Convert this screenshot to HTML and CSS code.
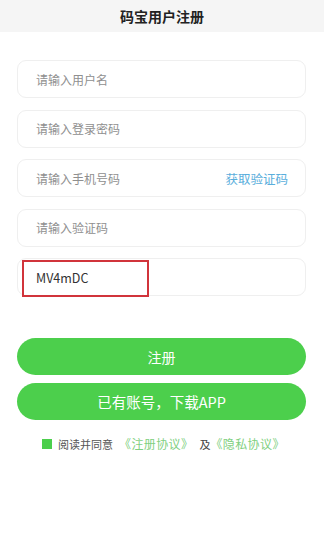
FILE: index.html
```html
<!DOCTYPE html>
<html lang="zh">
<head>
<meta charset="utf-8">
<title>码宝用户注册</title>
<link rel="stylesheet" href="styles.css">
</head>
<body>
<header class="topbar">码宝用户注册</header>
<main class="form">
  <div class="field"><span class="ph">请输入用户名</span></div>
  <div class="field"><span class="ph">请输入登录密码</span></div>
  <div class="field"><span class="ph">请输入手机号码</span><span class="getcode">获取验证码</span></div>
  <div class="field"><span class="ph">请输入验证码</span></div>
  <div class="field captcha"><span class="value">MV4mDC</span><span class="mark"></span></div>
  <div class="btn btn-register">注册</div>
  <div class="btn btn-download">已有账号，下载APP</div>
  <div class="agree">
    <span class="check"></span>
    <span class="agree-text">阅读并同意</span>
    <span class="link link-first">《注册协议》</span>
    <span class="and">及</span>
    <span class="link">《隐私协议》</span>
  </div>
</main>
</body>
</html>
```
FILE: styles.css
```css
* { box-sizing: border-box; }
html, body { margin: 0; padding: 0; background: #fff; }
body {
  font-family: "Noto Sans CJK SC", "Liberation Sans", sans-serif;
  color: #333;
  width: 324px;
  min-height: 540px;
  text-spacing-trim: space-all;
}
.topbar {
  height: 32px;
  background: #f5f5f5;
  display: flex;
  align-items: center;
  justify-content: center;
  font-size: 14px;
  font-weight: 700;
  color: #222;
}
.form {
  padding: 28px 18px 0 17px;
  display: flex;
  flex-direction: column;
}
.field {
  position: relative;
  height: 38px;
  border: 1px solid #efefef;
  border-radius: 9px;
  display: flex;
  align-items: center;
  justify-content: space-between;
  padding: 0 17px 0 18px;
  margin-bottom: 11.5px;
  font-size: 12px;
}
.ph { color: #8f8f8f; }
.getcode { color: #5aaedc; font-size: 12.5px; }
.value { color: #333; font-size: 12.5px; }
.captcha { margin-bottom: 0; }
.mark {
  position: absolute;
  left: 4px;
  top: 1px;
  width: 127px;
  height: 37px;
  border: 2px solid #d1343b;
}
.btn {
  height: 37px;
  border-radius: 19px;
  background: #4ccf4c;
  color: #fff;
  display: flex;
  align-items: center;
  justify-content: center;
  font-size: 14px;
}
.btn-register { margin-top: 42px; }
.btn-download { margin-top: 8px; font-size: 14.5px; }
.agree {
  margin-top: 17px;
  display: flex;
  align-items: center;
  padding-left: 25px;
  font-size: 11px;
  line-height: 14px;
  color: #555;
}
.check {
  width: 10px;
  height: 10px;
  background: #4ccf4c;
  margin-right: 6px;
}
.link { color: #7fd07f; font-size: 12px; letter-spacing: 0.4px; }
.link-first { margin-left: 6px; }
.and { margin: 0 0 0 6px; color: #444; }
```
